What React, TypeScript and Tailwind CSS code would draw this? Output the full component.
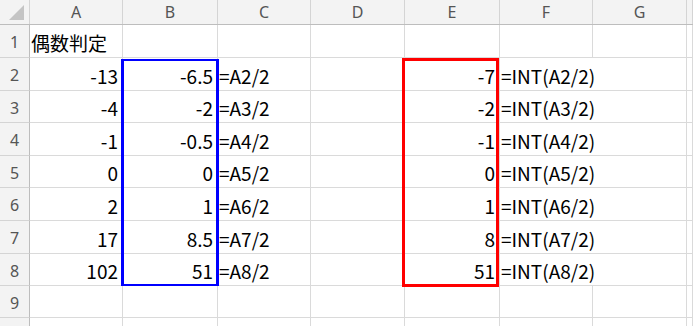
import React from 'react';

const cols = ['A', 'B', 'C', 'D', 'E', 'F', 'G', ''];
const colWidths = ['w-[93px]', 'w-[95px]', 'w-[93px]', 'w-[94px]', 'w-[95px]', 'w-[93px]', 'w-[94px]', 'flex-1'];
const rowHeights = ['h-[33px]', 'h-[33px]', 'h-[32px]', 'h-[33px]', 'h-[32px]', 'h-[33px]', 'h-[33px]', 'h-[32px]', 'h-[32px]', 'h-[33px]'];

type Cell = { text?: string; align?: 'left' | 'right'; overflow?: boolean };

const a = [-13, -4, -1, 0, 2, 17, 102];
const b = ['-6.5', '-2', '-0.5', '0', '1', '8.5', '51'];
const e = ['-7', '-2', '-1', '0', '1', '8', '51'];

function buildRows(): Cell[][] {
  const rows: Cell[][] = [];
  rows.push([{ text: '偶数判定', align: 'left' }, {}, {}, {}, {}, {}, {}, {}]);
  for (let i = 0; i < 7; i++) {
    const r = i + 2;
    rows.push([
      { text: String(a[i]), align: 'right' },
      { text: b[i], align: 'right' },
      { text: `=A${r}/2`, align: 'left' },
      {},
      { text: e[i], align: 'right' },
      { text: `=INT(A${r}/2)`, align: 'left', overflow: true },
      {},
      {},
    ]);
  }
  rows.push([{}, {}, {}, {}, {}, {}, {}, {}]);
  rows.push([{}, {}, {}, {}, {}, {}, {}, {}]);
  return rows;
}

export default function App() {
  const rows = buildRows();

  return (
    <div className="relative w-[693px] h-[326px] overflow-hidden bg-white font-['Noto_Sans_CJK_JP','Noto_Sans',sans-serif] text-black">
      {/* 列見出し */}
      <div className="flex h-[25px] bg-[#f3f3f3] border-b border-[#bdbdbd]">
        <div className="relative w-[30px] shrink-0 border-r border-[#d4d4d4]">
          <svg className="absolute left-[9px] top-[5px]" width="15" height="15" viewBox="0 0 15 15">
            <polygon points="15,0 15,15 0,15" fill="#c4c4c4" />
          </svg>
        </div>
        {cols.map((c, i) => (
          <div
            key={i}
            className={`${colWidths[i]} shrink-0 flex items-center justify-center border-r border-[#d4d4d4] text-[16px] leading-none text-[#555] font-['Noto_Sans',sans-serif]`}
          >
            {c}
          </div>
        ))}
      </div>

      {/* 行 */}
      {rows.map((row, ri) => (
        <div key={ri} className={`flex ${rowHeights[ri]}`}>
          <div className="w-[30px] shrink-0 flex items-center justify-center bg-[#f3f3f3] border-r border-b border-[#bdbdbd] border-b-[#d4d4d4] text-[16px] leading-none text-[#555] pt-[2px] font-['Noto_Sans',sans-serif]">
            {ri < 9 ? ri + 1 : ''}
          </div>
          {row.map((cell, ci) => {
            const hideRight = cell.overflow;
            return (
              <div
                key={ci}
                className={`${colWidths[ci]} shrink-0 flex items-end border-b border-[#dadada] ${hideRight ? '' : 'border-r'} ${
                  cell.align === 'right' ? 'justify-end pr-[4px]' : 'justify-start pl-[1px]'
                } pb-[3px]`}
              >
                {cell.text !== undefined && (
                  <span className="text-[19px] leading-[22px] whitespace-nowrap">{cell.text}</span>
                )}
              </div>
            );
          })}
        </div>
      ))}

      {/* 図形の枠 */}
      <div className="absolute left-[121px] top-[59px] w-[98px] h-[227px] border-x-[3px] border-y-2 border-[#0000ff]" />
      <div className="absolute left-[402px] top-[58px] w-[97px] h-[229px] border-[3px] border-[#ff0000]" />
    </div>
  );
}
